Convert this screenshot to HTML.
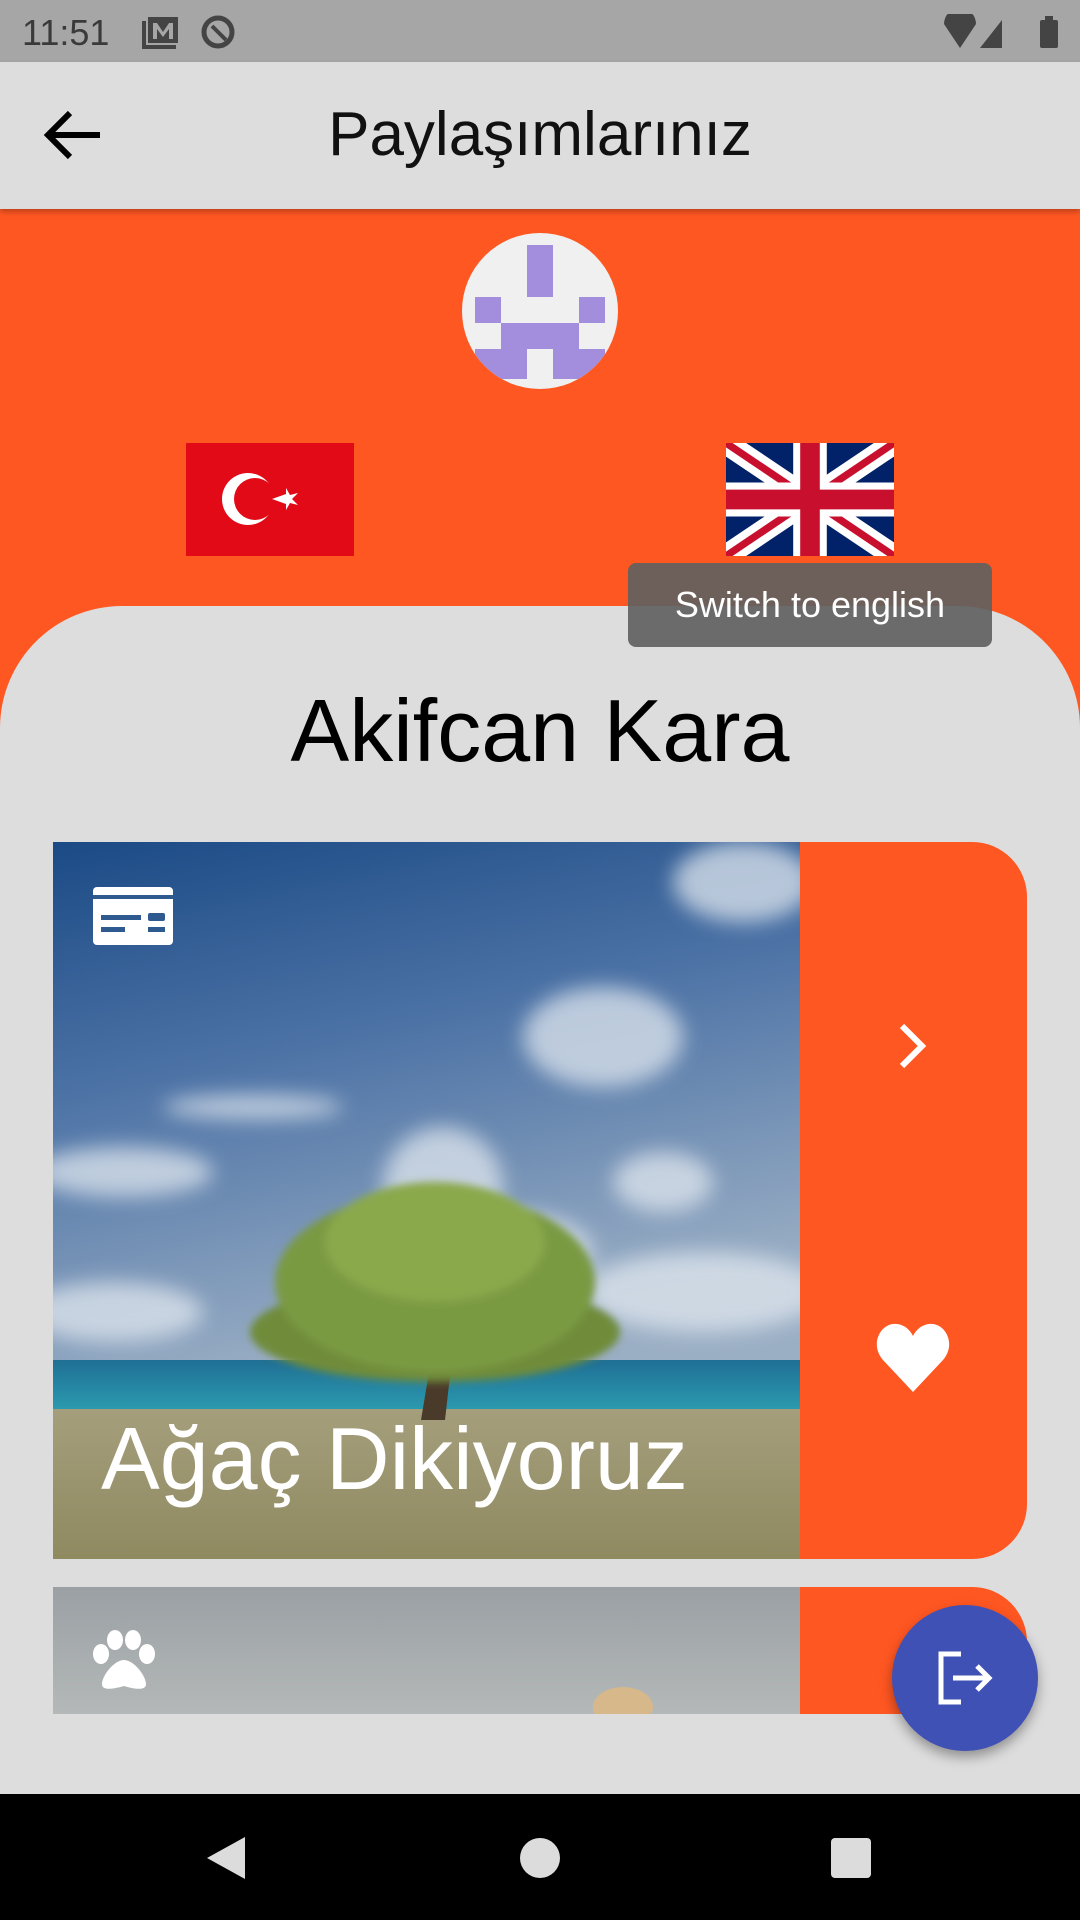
<!DOCTYPE html>
<html><head><meta charset="utf-8"><style>
*{margin:0;padding:0;box-sizing:border-box}
body{width:1080px;height:1920px;overflow:hidden;background:#dddddd;font-family:"Liberation Sans",sans-serif;position:relative}
.abs{position:absolute}
</style></head><body>
<!-- status bar -->
<div class="abs" style="left:0;top:0;width:1080px;height:62px;background:#a6a6a6"></div>
<div class="abs" style="left:22px;top:12px;font-size:36px;color:#3a3a3a">11:51</div>
<svg class="abs" style="left:140px;top:15px" width="40" height="36" viewBox="0 0 40 36"><rect x="2" y="6" width="4" height="28" fill="#444"/><rect x="2" y="30" width="34" height="4" fill="#444"/><rect x="8" y="2" width="30" height="26" fill="#444"/><path d="M13 24V8h4l6 9 6-9h4v16h-4V14l-6 8-6-8v10z" fill="#a6a6a6"/></svg>
<svg class="abs" style="left:200px;top:14px" width="36" height="36" viewBox="0 0 36 36"><circle cx="18" cy="18" r="14" fill="none" stroke="#444" stroke-width="5"/><path d="M12 12l14 14" stroke="#444" stroke-width="4"/></svg>
<svg class="abs" style="left:940px;top:14px" width="120" height="36" viewBox="0 0 120 36"><path d="M4 10a16 16 0 0 1 32 0L20 34z" fill="#444"/><path d="M40 34L62 6v28z" fill="#444"/><rect x="100" y="6" width="18" height="28" rx="2" fill="#444"/><rect x="105" y="2" width="8" height="5" fill="#444"/></svg>
<!-- app bar -->
<div class="abs" style="left:0;top:62px;width:1080px;height:147px;background:#dddddd;box-shadow:0 3px 5px rgba(0,0,0,.25);z-index:2"></div>
<svg class="abs" style="left:40px;top:105px;z-index:3" width="64" height="60" viewBox="0 0 64 60"><path d="M60 30H8M30 8L8 30l22 22" stroke="#000" stroke-width="6" fill="none"/></svg>
<div class="abs" style="left:0;top:99px;width:1080px;text-align:center;font-size:62px;color:#111;z-index:3">Paylaşımlarınız</div>
<!-- orange header -->
<div class="abs" style="left:0;top:209px;width:1080px;height:560px;background:#ff5722"></div>
<div class="abs" style="left:462px;top:233px;width:156px;height:156px;border-radius:50%;background:#f0f0f0;overflow:hidden">
 <svg width="156" height="156" viewBox="462 233 156 156" style="display:block"><g fill="#a28edc">
 <rect x="527" y="245" width="26" height="52"/>
 <rect x="475" y="297" width="26" height="26"/><rect x="579" y="297" width="26" height="26"/>
 <rect x="501" y="323" width="78" height="26"/>
 <rect x="475" y="349" width="52" height="30"/><rect x="553" y="349" width="52" height="30"/>
 </g></svg></div>
<!-- Turkish flag -->
<svg class="abs" style="left:186px;top:443px" width="168" height="113" viewBox="0 0 168 113"><rect width="168" height="113" fill="#e30a17"/><circle cx="62" cy="56" r="26" fill="#fff"/><circle cx="69" cy="56" r="21" fill="#e30a17"/><polygon points="86,56 100,51 100,45 104,52 112,50 106,56 112,62 104,60 100,67 100,61" fill="#fff"/></svg>
<!-- UK flag -->
<svg class="abs" style="left:726px;top:443px" width="168" height="113" viewBox="0 0 60 40" preserveAspectRatio="none"><rect width="60" height="40" fill="#012169"/><path d="M0 0L60 40M60 0L0 40" stroke="#fff" stroke-width="8"/><path d="M0 0L60 40M60 0L0 40" stroke="#c8102e" stroke-width="2.6"/><path d="M30 0v40M0 20h60" stroke="#fff" stroke-width="12"/><path d="M30 0v40M0 20h60" stroke="#c8102e" stroke-width="7"/></svg>
<!-- sheet -->
<div class="abs" style="left:0;top:606px;width:1080px;height:1200px;background:#dddddd;border-radius:122px 122px 0 0"></div>
<!-- tooltip -->
<div class="abs" style="left:628px;top:563px;width:364px;height:84px;background:rgba(97,97,97,.92);border-radius:8px;color:#fff;font-size:36px;line-height:84px;text-align:center;z-index:5">Switch to english</div>
<div class="abs" style="left:0;top:680px;width:1080px;text-align:center;font-size:88px;color:#000">Akifcan Kara</div>
<!-- card 1 -->
<div class="abs" style="left:53px;top:842px;width:974px;height:717px;background:#ff5722;border-radius:0 55px 55px 0;overflow:hidden">
 <svg width="747" height="717" viewBox="0 0 747 717" style="display:block">
  <defs>
   <linearGradient id="sky" x1="0" y1="0" x2="0.3" y2="1"><stop offset="0" stop-color="#1b4a85"/><stop offset=".45" stop-color="#4d73a6"/><stop offset="1" stop-color="#9aaec4"/></linearGradient>
   <linearGradient id="sea" x1="0" y1="0" x2="0" y2="1"><stop offset="0" stop-color="#1f6f95"/><stop offset="1" stop-color="#2c9cb0"/></linearGradient>
   <linearGradient id="sand" x1="0" y1="0" x2="0" y2="1"><stop offset="0" stop-color="#a49e7c"/><stop offset="1" stop-color="#8f8a60"/></linearGradient>
   <filter id="b"><feGaussianBlur stdDeviation="10"/></filter>
   <filter id="b2"><feGaussianBlur stdDeviation="4"/></filter>
  </defs>
  <rect width="747" height="530" fill="url(#sky)"/>
  <g fill="#dfe6ee" opacity=".75" filter="url(#b)">
   <ellipse cx="550" cy="195" rx="80" ry="50"/>
   <ellipse cx="390" cy="345" rx="60" ry="60"/>
   <ellipse cx="460" cy="410" rx="80" ry="40"/>
   <ellipse cx="70" cy="330" rx="90" ry="25"/>
   <ellipse cx="200" cy="265" rx="90" ry="12"/>
   <ellipse cx="610" cy="340" rx="50" ry="30"/>
   <ellipse cx="650" cy="450" rx="120" ry="40"/>
   <ellipse cx="690" cy="40" rx="70" ry="40"/>
   <ellipse cx="60" cy="470" rx="90" ry="30"/>
  </g>
  <rect y="518" width="747" height="52" fill="url(#sea)"/>
  <rect y="567" width="747" height="150" fill="url(#sand)"/>
  <path d="M368 578l10-60-40-50 10-5 35 40 4-40 10 0-2 45 38-38 7 7-42 48-6 53z" fill="#4a3a2a"/>
  <g filter="url(#b2)">
   <ellipse cx="382" cy="490" rx="185" ry="50" fill="#6f8c3a"/>
   <ellipse cx="382" cy="440" rx="160" ry="90" fill="#7a9a42"/>
   <ellipse cx="382" cy="400" rx="110" ry="60" fill="#8aa94c"/>
  </g>
 </svg>
 <svg class="abs" style="left:40px;top:45px" width="80" height="58" viewBox="0 0 80 58"><rect width="80" height="58" rx="4" fill="#fff"/><rect x="0" y="8" width="80" height="4" fill="#2f5a90"/><rect x="8" y="28" width="40" height="5" fill="#2f5a90"/><rect x="55" y="26" width="17" height="8" rx="2" fill="#2f5a90"/><rect x="8" y="40" width="24" height="5" fill="#2f5a90"/><rect x="55" y="40" width="17" height="5" fill="#2f5a90"/></svg>
 <div class="abs" style="left:48px;top:566px;font-size:88px;color:#fff;white-space:nowrap">Ağaç Dikiyoruz</div>
 <svg class="abs" style="left:845px;top:180px" width="30" height="48" viewBox="0 0 30 48"><path d="M4 4l20 20L4 44" stroke="#fff" stroke-width="6" fill="none"/></svg>
 <svg class="abs" style="left:822px;top:480px" width="76" height="72" viewBox="0 0 76 72"><path d="M38 70L8 38C-6 22 6 0 22 2c8 1 13 6 16 12 3-6 8-11 16-12 16-2 28 20 14 36z" fill="#fff"/></svg>
</div>
<!-- card 2 -->
<div class="abs" style="left:53px;top:1587px;width:974px;height:127px;background:#ff5722;border-radius:0 55px 0 0;overflow:hidden">
 <div style="width:747px;height:127px;background:linear-gradient(#9aa0a4,#b4b8b8)"></div>
 <svg class="abs" style="left:38px;top:43px" width="66" height="60" viewBox="0 0 66 60"><g fill="#fff"><ellipse cx="10" cy="24" rx="8" ry="10"/><ellipse cx="24" cy="10" rx="8" ry="10"/><ellipse cx="42" cy="10" rx="8" ry="10"/><ellipse cx="56" cy="24" rx="8" ry="10"/><path d="M33 30c-10 0-22 16-22 24 0 6 8 6 22 2 14 4 22 4 22-2 0-8-12-24-22-24z"/></g></svg>
 <div class="abs" style="left:540px;top:100px;width:60px;height:40px;border-radius:50%;background:#d6b88a"></div>
</div>
<!-- FAB -->
<div class="abs" style="left:892px;top:1605px;width:146px;height:146px;border-radius:50%;background:#3f51b5;box-shadow:0 6px 12px rgba(0,0,0,.35)"></div>
<svg class="abs" style="left:935px;top:1650px" width="62" height="56" viewBox="0 0 62 56"><path d="M26 4H6v48h20" stroke="#fff" stroke-width="5" fill="none"/><path d="M18 28h36M42 16l12 12-12 12" stroke="#fff" stroke-width="5" fill="none"/></svg>
<!-- nav bar -->
<div class="abs" style="left:0;top:1794px;width:1080px;height:126px;background:#000"></div>
<svg class="abs" style="left:205px;top:1835px" width="42" height="46" viewBox="0 0 42 46"><path d="M40 2v42L2 23z" fill="#dcdcdc"/></svg>
<div class="abs" style="left:520px;top:1838px;width:40px;height:40px;border-radius:50%;background:#dcdcdc"></div>
<div class="abs" style="left:831px;top:1838px;width:40px;height:40px;border-radius:4px;background:#dcdcdc"></div>
</body></html>
